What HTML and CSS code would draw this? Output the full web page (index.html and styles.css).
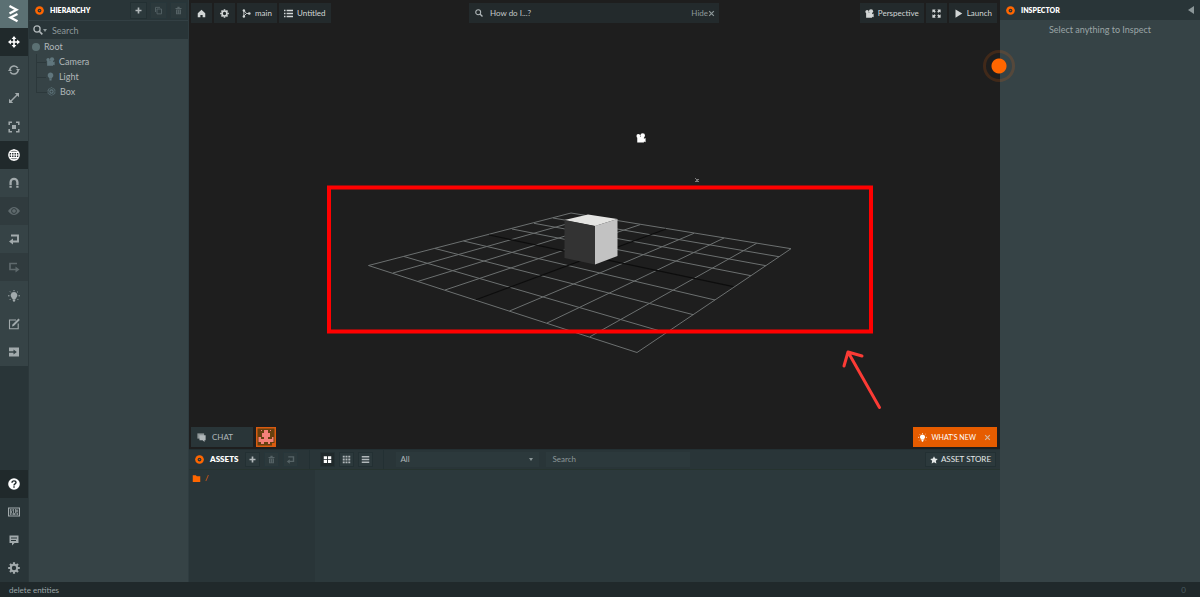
FILE: index.html
```
<!DOCTYPE html>
<html lang="en">
<head>
<meta charset="utf-8">
<title>Editor</title>
<link rel="stylesheet" href="styles.css">
</head>
<body>
<svg class="defs" aria-hidden="true">
  <symbol id="move" viewBox="0 0 12 12"><path d="M6 1v10M1 6h10" stroke="currentColor" stroke-width="1.6"/><path d="M6 0 8.400 2.900H3.600zM6 12 8.400 9.100H3.600zM0 6 2.900 3.600v4.800zM12 6 9.100 3.600v4.800z" fill="currentColor"/></symbol>
  <symbol id="rotate" viewBox="0 0 12 12"><path d="M2 5.2A4.2 4.2 0 0 1 9.8 4.2M10 6.8A4.2 4.2 0 0 1 2.2 7.8" fill="none" stroke="currentColor" stroke-width="1.5"/><path d="M8 5h4l-1.8 2.6zM0 7h4L1.9 4.3z" fill="currentColor"/></symbol>
  <symbol id="scale" viewBox="0 0 12 12"><path d="M2.5 9.5l7-7" stroke="currentColor" stroke-width="1.5"/><path d="M6.8 1H11v4.200zM1 6.800V11h4.200z" fill="currentColor"/></symbol>
  <symbol id="resize" viewBox="0 0 12 12"><path d="M1.200 4V1.200H4M8 1.200h2.800V4M10.800 8v2.800H8M4 10.800H1.200V8" fill="none" stroke="currentColor" stroke-width="1.500"/><path d="M4 4h4v4H4z" fill="currentColor"/></symbol>
  <symbol id="globe" viewBox="0 0 12 12"><g fill="none" stroke="currentColor"><circle cx="6" cy="6" r="5.200" stroke-width="1.300"/><ellipse cx="6" cy="6" rx="2.500" ry="5.200"/><path d="M6 1v10M1 6h10M1.600 3.500h8.800M1.600 8.500h8.800"/></g></symbol>
  <symbol id="magnet" viewBox="0 0 12 12"><path d="M2.600 8V5.200a3.400 3.400 0 0 1 6.800 0V8M2.600 8.800v2M9.400 8.800v2" fill="none" stroke="currentColor" stroke-width="2.300"/></symbol>
  <symbol id="eye" viewBox="0 0 12 12"><path d="M0 6Q6-2 12 6 6 14 0 6z" fill="currentColor"/><circle cx="6" cy="6" r="2.400" fill="none" stroke="#303b3e"/></symbol>
  <symbol id="undo" viewBox="0 0 12 12"><path d="M3 2.500h7v6H4" fill="none" stroke="currentColor" stroke-width="1.900"/><path d="M1 8.500 5 5.500v6z" fill="currentColor"/></symbol>
  <symbol id="redo" viewBox="0 0 12 12"><path d="M9 2.500H2v6h6" fill="none" stroke="currentColor" stroke-width="1.700"/><path d="M11.500 8.500 7.500 5.500v6z" fill="currentColor"/></symbol>
  <symbol id="bulb" viewBox="0 0 12 12"><path d="M6 1.900a3.400 3.400 0 0 1 2.200 6L7.500 9h-3l-.7-1.100A3.400 3.400 0 0 1 6 1.900zM4.700 9.300h2.600v1.300l-.8 1.200h-1l-.8-1.200z" fill="currentColor"/><path d="M6 0v1.200M2 1.500l.8.800M10 1.500l-.8.800M0 5.800h1.500M10.500 5.800H12M1.800 9.800l.9-.9M10.200 9.800l-.9-.9" stroke="currentColor"/></symbol>
  <symbol id="pin" viewBox="0 0 12 12"><path d="M6 .6a4 4 0 0 1 2.200 7.200L7.500 9h-3l-.7-1.200A4 4 0 0 1 6 .6zM4.600 9.400h2.800v1.800H4.600z" fill="currentColor"/></symbol>
  <symbol id="edit" viewBox="0 0 12 12"><path d="M8 2H1.500v8.800h8.700V5.500" fill="none" stroke="currentColor" stroke-width="1.100"/><path d="M4 8.500l.5-2L10.500.6l1.300 1.300-6 6z" fill="currentColor"/></symbol>
  <symbol id="exit" viewBox="0 0 12 12"><path d="M1 1.500h10v9H1z" fill="currentColor"/><path d="M1 6h5" stroke="#364346" stroke-width="1.500"/><path d="M5.500 3.500 8.800 6 5.500 8.500z" fill="#364346"/></symbol>
  <symbol id="help" viewBox="0 0 12 12"><circle cx="6" cy="6" r="5.800" fill="currentColor"/><path d="M4 4.700C4 2.200 8 2.300 8 4.600 8 6 6 5.900 6 7.400M6 8.300v1.500" fill="none" stroke="#20292b" stroke-width="1.400"/></symbol>
  <symbol id="keys" viewBox="0 0 12 12"><path d="M.5 2h11v8H.5z" fill="none" stroke="currentColor" stroke-width="1.200"/><path d="M2 4h1.500M4.500 4H6M7 4h1M9 3.500v3M2 6h2M5 6h1M7 6h1M2 8h1.500M4.500 8h3M8.500 8H10" stroke="currentColor" stroke-width="1.300"/></symbol>
  <symbol id="note" viewBox="0 0 12 12"><path fill-rule="evenodd" d="M1.500 1.500h9v7.500H6.500L4 11.500V9H1.500zM3 3.500v1h6v-1zM3 6v1h5V6z" fill="currentColor"/></symbol>
  <symbol id="gear" viewBox="0 0 12 12"><circle cx="6" cy="6" r="3.200" fill="none" stroke="currentColor" stroke-width="2"/><path d="M6 .2v2.200M6 9.600v2.200M.2 6h2.200M9.600 6h2.200M2 2l1.500 1.500M8.500 8.500 10 10M10 2 8.500 3.500M3.500 8.500 2 10" stroke="currentColor" stroke-width="2.200"/></symbol>
  <symbol id="plus" viewBox="0 0 12 12"><path d="M6 2v8M2 6h8" stroke="currentColor" stroke-width="2.200"/></symbol>
  <symbol id="copy" viewBox="0 0 12 12"><path d="M4 4h6v6.500H4zM2 8V1.800h6" fill="none" stroke="currentColor" stroke-width="1.200"/></symbol>
  <symbol id="trash" viewBox="0 0 12 12"><path d="M2 2.500h2.500V1h3v1.500H10V4H2zM2.700 4.500h6.600V11H2.700z" fill="currentColor"/><path d="M4.700 5.500V10M7.300 5.500V10" stroke="#29353a" stroke-width=".7"/></symbol>
  <symbol id="search" viewBox="0 0 12 12"><circle cx="4.800" cy="4.800" r="3.700" fill="none" stroke="currentColor" stroke-width="1.600"/><path d="M7.500 7.500 11.200 11.200" stroke="currentColor" stroke-width="2"/></symbol>
  <symbol id="camera" viewBox="0 0 12 12"><path d="M1.500 4.500h8V7l2-1v5l-2-.8v1.300h-8z" fill="currentColor"/><circle cx="2.800" cy="3.500" r="2.300" fill="currentColor"/><circle cx="8" cy="3" r="2.800" fill="currentColor"/></symbol>
  <symbol id="cube" viewBox="0 0 12 12"><path d="M6 .8 10.500 3.400v5.200L6 11.200 1.500 8.600V3.400z" fill="none" stroke="currentColor" stroke-width="1.200" stroke-dasharray="1.500 .5"/><circle cx="6" cy="6" r="2.200" fill="none" stroke="currentColor" stroke-width="1.400"/></symbol>
  <symbol id="target" viewBox="0 0 12 12"><circle cx="6" cy="6" r="5.800" fill="#ff6600"/><circle cx="6" cy="6" r="2.500" fill="#29353a"/><path d="M4.800 5.300h2.400L6 6.800z" fill="#ff6600"/></symbol>
  <symbol id="home" viewBox="0 0 12 12"><path d="M6 1 11 5.500V11H7.500V8h-3v3H1V5.500z" fill="currentColor"/></symbol>
  <symbol id="branch" viewBox="0 0 12 12"><path d="M2.500 2v8M3 2.500l3 3.500h4M3 9l3-3" fill="none" stroke="currentColor" stroke-width="1.200"/><circle cx="2.500" cy="2" r="1.600" fill="currentColor"/><circle cx="2.500" cy="10" r="1.600" fill="currentColor"/><circle cx="9.700" cy="6" r="1.800" fill="currentColor"/></symbol>
  <symbol id="list" viewBox="0 0 12 12"><path d="M0 2h2M0 6h2M0 10h2M3.500 2H12M3.500 6H12M3.500 10H12" stroke="currentColor" stroke-width="1.700"/></symbol>
  <symbol id="full" viewBox="0 0 12 12"><path d="M.5.500h4.500L3.700 1.800 5 3.500 3.500 5 1.800 3.700.5 5zM11.500.500V5l-1.300-1.300L8.500 5 7 3.500l1.300-1.700L7 .5zM.5 11.500V7l1.300 1.300L3.500 7 5 8.500l-1.300 1.700L5 11.500zM11.500 11.500H7l1.300-1.300L7 8.500 8.500 7l1.700 1.300L11.500 7z" fill="currentColor"/></symbol>
  <symbol id="play" viewBox="0 0 12 12"><path d="M2 .5 11 6 2 11.500z" fill="currentColor"/></symbol>
  <symbol id="chat" viewBox="0 0 12 12"><path d="M.5.500h9v7h-5L2.500 7.500h-2z" fill="currentColor" opacity=".75"/><path d="M3.300 3h8.200v6.600H10V12L7.500 9.600H3.300z" fill="currentColor"/></symbol>
  <symbol id="tiles" viewBox="0 0 12 12"><path d="M1 1.500h4.400v4H1zM6.600 1.500H11v4H6.600zM1 6.700h4.400v4H1zM6.600 6.700H11v4H6.600z" fill="currentColor"/></symbol>
  <symbol id="dots" viewBox="0 0 12 12"><path d="M1 2.200h10M1 6h10M1 9.800h10" stroke="currentColor" stroke-width="2.400" stroke-dasharray="2.600 1.100"/></symbol>
  <symbol id="rows" viewBox="0 0 12 12"><path d="M1 2.200h10M1 6h10M1 9.800h10" stroke="currentColor" stroke-width="2"/></symbol>
  <symbol id="folder" viewBox="0 0 12 12"><path d="M1 1.500h4L6.500 3H11v7.500H1z" fill="currentColor"/></symbol>
  <symbol id="star" viewBox="0 0 12 12"><path d="M6 .4l1.700 3.500 4 .6-2.900 2.700.7 4.100L6 9.400l-3.500 1.900.7-4.100L.3 4.500l4-.6z" fill="currentColor"/></symbol>
  <symbol id="cross" viewBox="0 0 12 12"><path d="M2 2l8 8M10 2l-8 8" stroke="currentColor" stroke-width="2"/></symbol>
</svg>

<div class="editor">
  <nav class="tools" aria-label="Tools">
    <button class="tool logo" aria-label="Menu"><svg viewBox="0 0 28 28"><path d="M9.500 6 16.500 9.800 9.500 13.500M17.500 14 10.500 17.500l7 3.800" fill="none" stroke="#fff" stroke-width="2.300"/></svg></button>
    <button class="tool on" aria-label="Translate"><svg><use href="#move"/></svg></button>
    <button class="tool" aria-label="Rotate"><svg><use href="#rotate"/></svg></button>
    <button class="tool" aria-label="Scale"><svg><use href="#scale"/></svg></button>
    <button class="tool last" aria-label="Resize"><svg><use href="#resize"/></svg></button>
    <button class="tool on" aria-label="World space"><svg><use href="#globe"/></svg></button>
    <button class="tool" aria-label="Snap"><svg><use href="#magnet"/></svg></button>
    <button class="tool off" aria-label="Focus"><svg><use href="#eye"/></svg></button>
    <button class="tool" aria-label="Undo"><svg><use href="#undo"/></svg></button>
    <button class="tool off" aria-label="Redo"><svg><use href="#redo"/></svg></button>
    <button class="tool last" aria-label="Bake lightmaps"><svg><use href="#bulb"/></svg></button>
    <button class="tool" aria-label="Code editor"><svg><use href="#edit"/></svg></button>
    <button class="tool" aria-label="Publish"><svg><use href="#exit"/></svg></button>
    <div class="grow"></div>
    <button class="tool on" aria-label="Help"><svg><use href="#help"/></svg></button>
    <button class="tool low" aria-label="Shortcuts"><svg><use href="#keys"/></svg></button>
    <button class="tool low" aria-label="Feedback"><svg><use href="#note"/></svg></button>
    <button class="tool low" aria-label="Settings"><svg><use href="#gear"/></svg></button>
  </nav>

  <aside class="hierarchy">
    <header class="head">
      <svg class="target"><use href="#target"/></svg><h2>HIERARCHY</h2>
      <div class="acts wide">
        <button class="sq" aria-label="Add entity"><svg><use href="#plus"/></svg></button>
        <button class="sq dim" aria-label="Duplicate"><svg><use href="#copy"/></svg></button>
        <button class="sq dim" aria-label="Delete"><svg><use href="#trash"/></svg></button>
      </div>
    </header>
    <label class="find"><svg><use href="#search"/></svg><i class="caret"></i><input type="text" placeholder="Search" aria-label="Search entities"></label>
    <ul class="tree">
      <li><span class="row"><i class="ball"></i>Root</span>
        <ul>
          <li><span class="row"><svg><use href="#camera"/></svg>Camera</span></li>
          <li><span class="row"><svg><use href="#pin"/></svg>Light</span></li>
          <li><span class="row"><svg><use href="#cube"/></svg>Box</span></li>
        </ul>
      </li>
    </ul>
  </aside>

  <main class="center">
    <section class="viewport">
      <svg class="scene" viewBox="189 0 811 449" role="img" aria-label="3D scene">
        <g fill="none" stroke="#6c7070" stroke-width="1">
          <path d="M571 213 791 248.700 637 352.500 368.500 265.500z"/>
          <path d="M553 218 779 256.700M534 223.300 766 265.700M512 229 751 275.700M463.500 241 715 300M435 248.500 693.300 314.700M404 256.500 666 332.700"/>
          <path d="M592.500 216.700 393 273M615.500 220.500 417.500 281.500M640 224.700 445 290M694 233.300 509.500 311M724 238 547 323M756.700 243.300 590 336.700"/>
        </g>
        <path d="M489 235 733.300 286.700M666 229 476 299.700" stroke="#0d0d0d" stroke-width="1.200"/>
        <path d="M564.500 220 588 214.500 617.500 219 595 226z" fill="#e4e4e2"/>
        <path d="M564.500 220 595 226v38.500L564.500 258z" fill="#333"/>
        <path d="M595 226 617.500 219v37L595 264.500z" fill="#c2c2c2"/>
        <svg x="636" y="133" width="11" height="11" color="#fff"><use href="#camera"/></svg>
        <path d="M695.500 178.500l1 1M698.500 179l-1.500 1.500 1.500 1.500M695.500 182l1-1" stroke="#ddd" fill="none"/>
        <rect x="329" y="187.500" width="542" height="144" fill="none" stroke="#f00" stroke-width="4"/>
        <path d="M879.500 407.500 848 352l14 4M848 352l-4 14" fill="none" stroke="#fb3b35" stroke-width="3" stroke-linecap="round" stroke-linejoin="round"/>
      </svg>
      <div class="bar top">
        <div class="group">
          <button class="btn icon" aria-label="Home"><svg><use href="#home"/></svg></button>
          <button class="btn icon" aria-label="Settings"><svg><use href="#gear"/></svg></button>
          <button class="btn"><svg><use href="#branch"/></svg>main</button>
          <button class="btn"><svg><use href="#list"/></svg>Untitled</button>
        </div>
        <div class="ask"><svg><use href="#search"/></svg><input type="text" placeholder="How do I...?" aria-label="How do I"><button>Hide<svg><use href="#cross"/></svg></button></div>
        <div class="group end">
          <button class="btn"><svg><use href="#camera"/></svg>Perspective</button>
          <button class="btn icon" aria-label="Fullscreen"><svg><use href="#full"/></svg></button>
          <button class="btn"><svg><use href="#play"/></svg>Launch</button>
        </div>
      </div>
      <div class="bar bottom">
        <button class="chat"><svg><use href="#chat"/></svg>CHAT</button>
        <svg class="avatar" viewBox="0 0 20 20" role="img" aria-label="User"><path d="M0 0h20v20H0z" fill="#d95b10"/><path d="M1.500 1.500h17V16H16v2.500H1.500z" fill="#66400f"/><path d="M8 3h4v3h2v4h-2v2h4v-2h1.500v5H14v2h-2v-2H8v2H5v-2H2.500v-5H5v2h3v-2H6V6h2zM5 3h1v1H5zM14 3h1v1h-1z" fill="#f48078"/></svg>
        <div class="news"><svg><use href="#bulb"/></svg><a href="#">WHAT'S NEW</a><button aria-label="Close"><svg><use href="#cross"/></svg></button></div>
      </div>
    </section>

    <section class="assets">
      <header class="head">
        <svg class="target"><use href="#target"/></svg><h2>ASSETS</h2>
        <div class="acts">
          <button class="sq" aria-label="Add asset"><svg><use href="#plus"/></svg></button>
          <button class="sq dim" aria-label="Delete asset"><svg><use href="#trash"/></svg></button>
          <button class="sq dim" aria-label="Back"><svg><use href="#undo"/></svg></button>
        </div>
        <div class="acts views">
          <button class="sq on" aria-label="Large grid"><svg><use href="#tiles"/></svg></button>
          <button class="sq" aria-label="Small grid"><svg><use href="#dots"/></svg></button>
          <button class="sq" aria-label="List"><svg><use href="#rows"/></svg></button>
        </div>
        <div class="filter"><select aria-label="Asset type"><option>All</option></select><i class="caret"></i></div>
        <input class="lookup" type="text" placeholder="Search" aria-label="Search assets">
        <button class="store"><svg><use href="#star"/></svg>ASSET STORE</button>
      </header>
      <div class="files">
        <div class="folders"><a href="#"><svg><use href="#folder"/></svg>/</a></div>
        <div class="grow"></div>
      </div>
    </section>
  </main>

  <aside class="inspector">
    <header class="head"><svg class="target"><use href="#target"/></svg><h2>INSPECTOR</h2><button class="fold" aria-label="Collapse"></button></header>
    <p>Select anything to Inspect</p>
    <span class="beacon"></span>
  </aside>
</div>
<footer class="status"><span>delete entities</span><span class="count">0</span></footer>
</body>
</html>
```
FILE: styles.css
```
* { box-sizing: border-box; }
body {
  margin: 0;
  height: 100vh;
  display: flex;
  flex-direction: column;
  overflow: hidden;
  background: #364346;
  color: #b1b8ba;
  font: 8px/15px Lato, "Liberation Sans", sans-serif;
}
button, input, select {
  font: inherit;
  color: inherit;
  background: none;
  border: 0;
  padding: 0;
  margin: 0;
  border-radius: 0;
  outline: 0;
}
a { color: inherit; text-decoration: none; }
h2 { margin: 0; font-size: 7px; font-weight: 800; color: #fff; }
ul { list-style: none; margin: 0; padding: 0; }
svg { flex: none; width: 10px; height: 10px; display: block; }
.defs { position: absolute; width: 0; height: 0; }
.grow { flex: 1; }
.editor { flex: 1; display: flex; min-height: 0; }

.tools {
  width: 29px;
  flex: none;
  display: flex;
  flex-direction: column;
  background: #293538;
  border-right: 1px solid #2c383b;
}
.tool {
  height: 28px;
  flex: none;
  display: flex;
  align-items: center;
  justify-content: center;
  background: #364346;
  color: #a2aaac;
}
.tool svg { width: 12px; height: 12px; }
.tool.logo { background: #5b7073; }
.tool.logo svg { width: 28px; height: 28px; }
.tool.on { background: #20292b; color: #fff; }
.tool.off { background: #303b3e; color: #5f6a6d; }
.tool.low { background: #293538; }
.tool.last { height: 29px; }

.head {
  height: 20px;
  display: flex;
  align-items: center;
  background: #293538;
}
.target { width: 9px; height: 9px; margin: 0 6px; }
.acts { display: flex; gap: 4px; }
.wide { margin-left: auto; margin-right: 1px; }
.sq {
  width: 15px;
  height: 15px;
  display: flex;
  align-items: center;
  justify-content: center;
  border: 1px solid #233033;
  background: #2c393c;
}
.sq svg { width: 9px; height: 9px; }
.sq.dim { color: #566366; border-color: #27363a; }
.sq.on { background: #20292b; color: #fff; }
.caret {
  border: 3px solid transparent;
  border-top-color: #8b9698;
  border-bottom: 0;
}

.hierarchy { width: 160px; flex: none; border-right: 1px solid #2f3c40; font-size: 9px; }
.hierarchy .wide { gap: 3px; }
.hierarchy .sq { width: 17px; height: 17px; }
.find {
  height: 19px;
  display: flex;
  align-items: center;
  padding-left: 4px;
  background: #293538;
  border-top: 1px solid #334044;
}
.find .caret { border-width: 3px 2px 0; }
.find input { width: 100px; margin-left: 5px; }
::placeholder { color: #8d989a; opacity: 1; }
.tree { padding-left: 3px; }
.row { display: flex; align-items: center; gap: 4px; }
.row svg { color: #60767d; width: 9px; height: 9px; }
.ball { width: 8px; height: 8px; border-radius: 50%; background: #5b7073; }
.tree ul { margin-left: 4px; }
.tree li li { display: flex; border-left: 1px solid #2c383b; }
.tree li li::before {
  content: "";
  width: 9px;
  height: 8px;
  border-bottom: 1px solid #2c383b;
}
.tree li li:last-child { border-left-color: transparent; }
.tree li li:last-child::before { border-left: 1px solid #2c383b; margin-left: -1px; width: 10px; }

.center { flex: 1; min-width: 0; display: flex; flex-direction: column; }
.viewport {
  flex: 1;
  min-height: 0;
  position: relative;
  display: flex;
  flex-direction: column;
  justify-content: space-between;
  background: #1e1e1e;
}
.scene { position: absolute; inset: 0; width: 100%; height: 100%; }
.bar { position: relative; display: flex; padding: 3px 3px 2px 2px; }
.top { display: grid; grid-template-columns: 1fr 250px 1fr; }
.group { display: flex; gap: 2px; }
.end { justify-content: flex-end; }
.btn {
  height: 20px;
  display: flex;
  align-items: center;
  gap: 4px;
  padding: 0 5px;
  background: #232a2c;
  color: #d2d6d6;
}
.btn.icon { padding: 0 6px; }
.btn svg { width: 9px; height: 9px; }
.ask { height: 20px; display: flex; align-items: center; padding: 0 4px 0 6px; background: #232a2c; }
.ask svg { width: 8px; height: 8px; }
.ask input { flex: 1; min-width: 0; margin-left: 7px; }
.ask input::placeholder { color: #c4c9ca; }
.ask button { display: flex; align-items: center; color: #8d989a; }
.ask button svg { width: 7px; height: 7px; }
.bottom { gap: 3px; }
.chat {
  width: 62px;
  height: 20px;
  display: flex;
  align-items: center;
  gap: 6px;
  padding: 0 6px;
  background: #293538;
}
.chat svg { width: 9px; height: 9px; }
.avatar { width: 20px; height: 20px; }
.news {
  height: 20px;
  margin-left: auto;
  display: flex;
  align-items: center;
  gap: 4px;
  padding: 0 6px 0 5px;
  background: #e65c00;
  color: #fff;
  font-size: 7px;
  white-space: nowrap;
}
.news svg { width: 9px; height: 9px; }
.news button { margin-left: 4px; color: #d5b9a0; }
.news button svg { width: 7px; height: 7px; }

.assets { height: 133px; flex: none; display: flex; flex-direction: column; }
.assets .head { height: 21px; border-top: 1px solid #233033; border-bottom: 1px solid #26332f; }
.assets h2 { font-size: 8px; }
.assets .acts { margin-left: 7px; }
.assets .views {
  margin: 0 0 0 11px;
  padding: 2px 10px;
  border: solid #233033;
  border-width: 0 1px;
}
.filter {
  width: 143px;
  height: 15px;
  margin-left: 12px;
  display: flex;
  align-items: center;
  padding: 0 6px 0 4px;
  background: #2c393c;
}
.filter select { flex: 1; appearance: none; }
.filter .caret { border-width: 3px 2px 0; }
.lookup { width: 144px; height: 15px; margin-left: 7px; padding-left: 6px; background: #2c393c; }
.store {
  height: 15px;
  margin: 0 4px 0 auto;
  display: flex;
  align-items: center;
  gap: 3px;
  padding: 0 4px;
  border: 1px solid #233033;
  background: #2c393c;
  color: #e5e8e8;
}
.store svg { width: 8px; height: 8px; }
.files { flex: 1; display: flex; background: #2c393c; }
.folders { width: 126px; background: #293538; padding: 1px 3px; color: #ff6600; }
.folders a { display: flex; align-items: center; gap: 4px; }
.folders svg { width: 9px; height: 9px; }

.inspector { width: 200px; flex: none; position: relative; font-size: 9px; }
.fold {
  margin: 0 6px 0 auto;
  border: 4px solid transparent;
  border-width: 4px 6px 4px 0;
  border-right-color: #8b9698;
}
.inspector p { margin: 2px 0; text-align: center; color: #9ba5a7; }
.beacon {
  position: absolute;
  left: -17px;
  top: 50px;
  width: 32px;
  height: 32px;
  border: 3px solid #ff660028;
  border-radius: 50%;
  background: radial-gradient(circle, #ff6600 7px, transparent 8px);
}
.status {
  height: 15px;
  flex: none;
  display: flex;
  justify-content: space-between;
  padding: 1px 14px 0 9px;
  background: #20292b;
  color: #9ba5a7;
}
.count { color: #4a5c62; }
```
